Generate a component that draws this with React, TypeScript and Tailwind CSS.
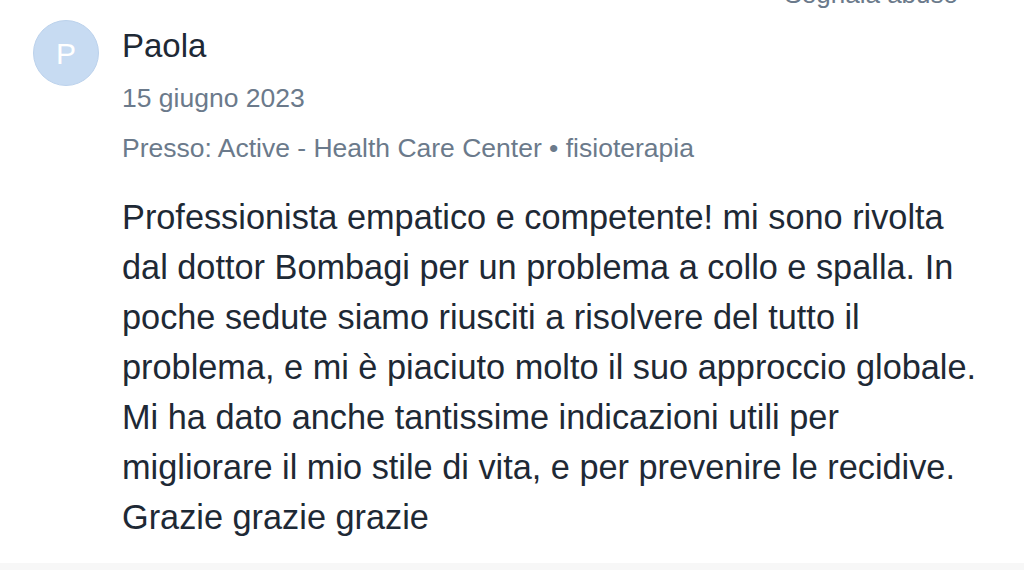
import React from 'react';

const review = {
    initial: 'P',
    name: 'Paola',
    date: '15 giugno 2023',
    place: 'Presso: Active - Health Care Center • fisioterapia',
    lines: [
        'Professionista empatico e competente! mi sono rivolta',
        'dal dottor Bombagi per un problema a collo e spalla. In',
        'poche sedute siamo riusciti a risolvere del tutto il',
        'problema, e mi è piaciuto molto il suo approccio globale.',
        'Mi ha dato anche tantissime indicazioni utili per',
        'migliorare il mio stile di vita, e per prevenire le recidive.',
        'Grazie grazie grazie',
    ],
};

const App: React.FC = () => {
    return (
        <div className="w-[1024px] h-[570px] overflow-hidden bg-white flex flex-col" style={{ fontFamily: '"Liberation Sans", Arial, sans-serif' }}>
            {/* report link, scrolled mostly out of view */}
            <div className="flex justify-end pr-[66px] -mt-[18px] h-[24px] text-[26px] leading-[24px] text-[#6b7a8b]">
                <span>Segnala abuso</span>
            </div>

            <div className="flex gap-[23px] pl-[33px] flex-1">
                <div className="w-[66px] h-[66px] mt-[14px] shrink-0 rounded-full bg-[#c7dbf2] border border-[#bcd2ec] flex items-center justify-center text-white text-[30px]">
                    {review.initial}
                </div>

                <div className="flex flex-col">
                    <p className="text-[33px] leading-[40px] text-[#1e2935] mt-[20px]">{review.name}</p>
                    <p className="text-[26.5px] leading-[32px] text-[#6b7a8b] mt-[16px]">{review.date}</p>
                    <p className="text-[26.5px] leading-[32px] text-[#6b7a8b] mt-[18px]">{review.place}</p>
                    <div className="mt-[28px] text-[34.3px] leading-[50px] text-[#1e2935]">
                        {review.lines.map((l, i) => <p key={i}>{l}</p>)}
                    </div>
                </div>
            </div>

            <div className="h-[7px] bg-[#f7f7f7]" />
        </div>
    );
};

export default App;
